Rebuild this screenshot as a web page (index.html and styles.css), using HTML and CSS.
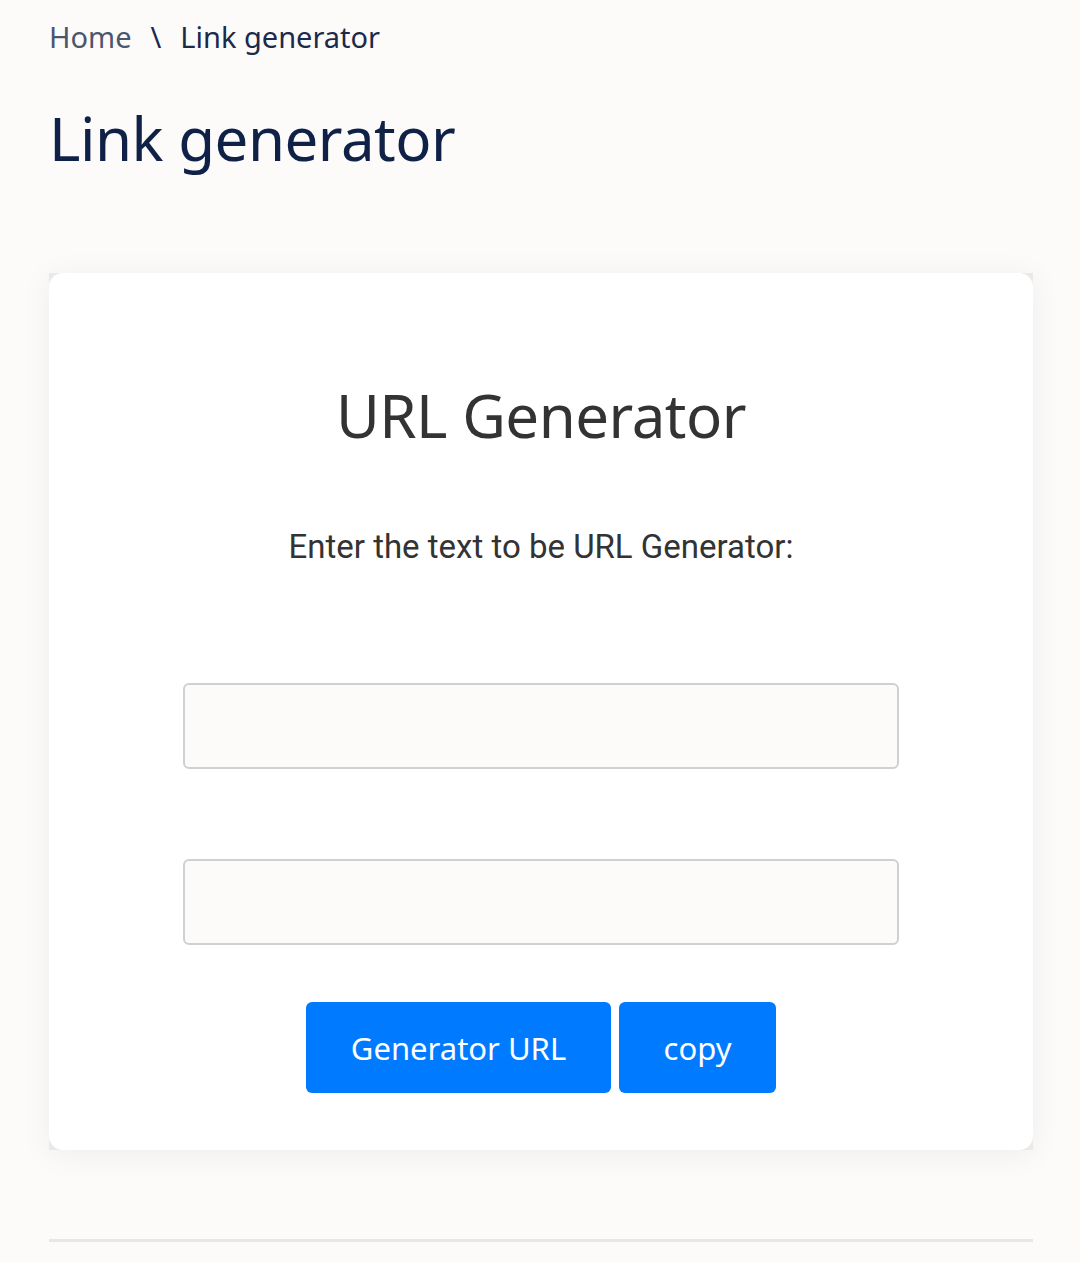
FILE: index.html
```html
<!DOCTYPE html>
<html lang="en">
<head>
<meta charset="utf-8">
<title>Link generator</title>
<link rel="stylesheet" href="styles.css">
</head>
<body>
<div class="page">
  <nav class="breadcrumb">
    <span class="crumb-home">Home</span>
    <span class="crumb-sep">\</span>
    <span class="crumb-current">Link generator</span>
  </nav>
  <h1 class="page-title">Link generator</h1>
  <div class="card-frame">
    <div class="card">
      <h2 class="card-title">URL Generator</h2>
      <p class="card-text">Enter the text to be URL Generator:</p>
      <input class="field field-first" type="text">
      <input class="field field-second" type="text">
      <div class="actions">
        <button class="btn btn-gen">Generator URL</button>
        <button class="btn btn-copy">copy</button>
      </div>
    </div>
  </div>
  <hr class="divider">
</div>
</body>
</html>
```

FILE: styles.css
```css
html, body {
  margin: 0;
  padding: 0;
  background: #fcfbf9;
}
.page {
  padding: 0 47px 0 49px;
}
.breadcrumb {
  font-family: "Noto Sans", "Open Sans", sans-serif;
  font-size: 29px;
  line-height: 38px;
  padding-top: 18px;
  display: flex;
}
.crumb-home { color: #4b566f; }
.crumb-sep { color: #1b2a4b; margin: 0 19px 0 19px; }
.crumb-current { color: #1b2a4b; }
.page-title {
  font-family: "Noto Sans", "Open Sans", sans-serif;
  font-weight: 400;
  font-size: 60px;
  line-height: 80px;
  color: #0f2147;
  margin: 42px 0 0 0;
  letter-spacing: -0.5px;
}
.card-frame {
  margin-top: 95px;
  background: #e9e9e9;
  box-shadow: 0 4px 30px rgba(0,0,0,0.06);
}
.card {
  background: #fff;
  border-radius: 14px;
  padding: 97px 0 57px 0;
  display: flex;
  flex-direction: column;
  align-items: center;
}
.card-title {
  font-family: "Noto Sans", "Open Sans", sans-serif;
  font-weight: 400;
  font-size: 60px;
  line-height: 90px;
  color: #333;
  margin: 0;
  letter-spacing: -0.5px;
}
.card-text {
  font-family: Roboto, sans-serif;
  font-size: 33px;
  line-height: 40px;
  color: #333;
  margin: 67px 0 0 0;
}
.field {
  box-sizing: border-box;
  width: 716px;
  height: 86px;
  border: 2px solid #d0d0d0;
  border-radius: 6px;
  background: #fcfbf9;
  display: block;
}
.field-first { margin-top: 116px; }
.field-second { margin-top: 90px; }
.actions {
  display: flex;
  gap: 8px;
  margin-top: 57px;
}
.btn {
  font-family: "Noto Sans", "Open Sans", sans-serif;
  font-size: 31px;
  color: #fff;
  background: #007bff;
  border: none;
  border-radius: 6px;
  height: 91px;
  padding: 0;
}
.btn-gen { width: 305px; }
.btn-copy { width: 157px; }
.divider {
  margin: 89px 0 0 0;
  border: none;
  border-top: 3px solid #e8e7e5;
}
```
